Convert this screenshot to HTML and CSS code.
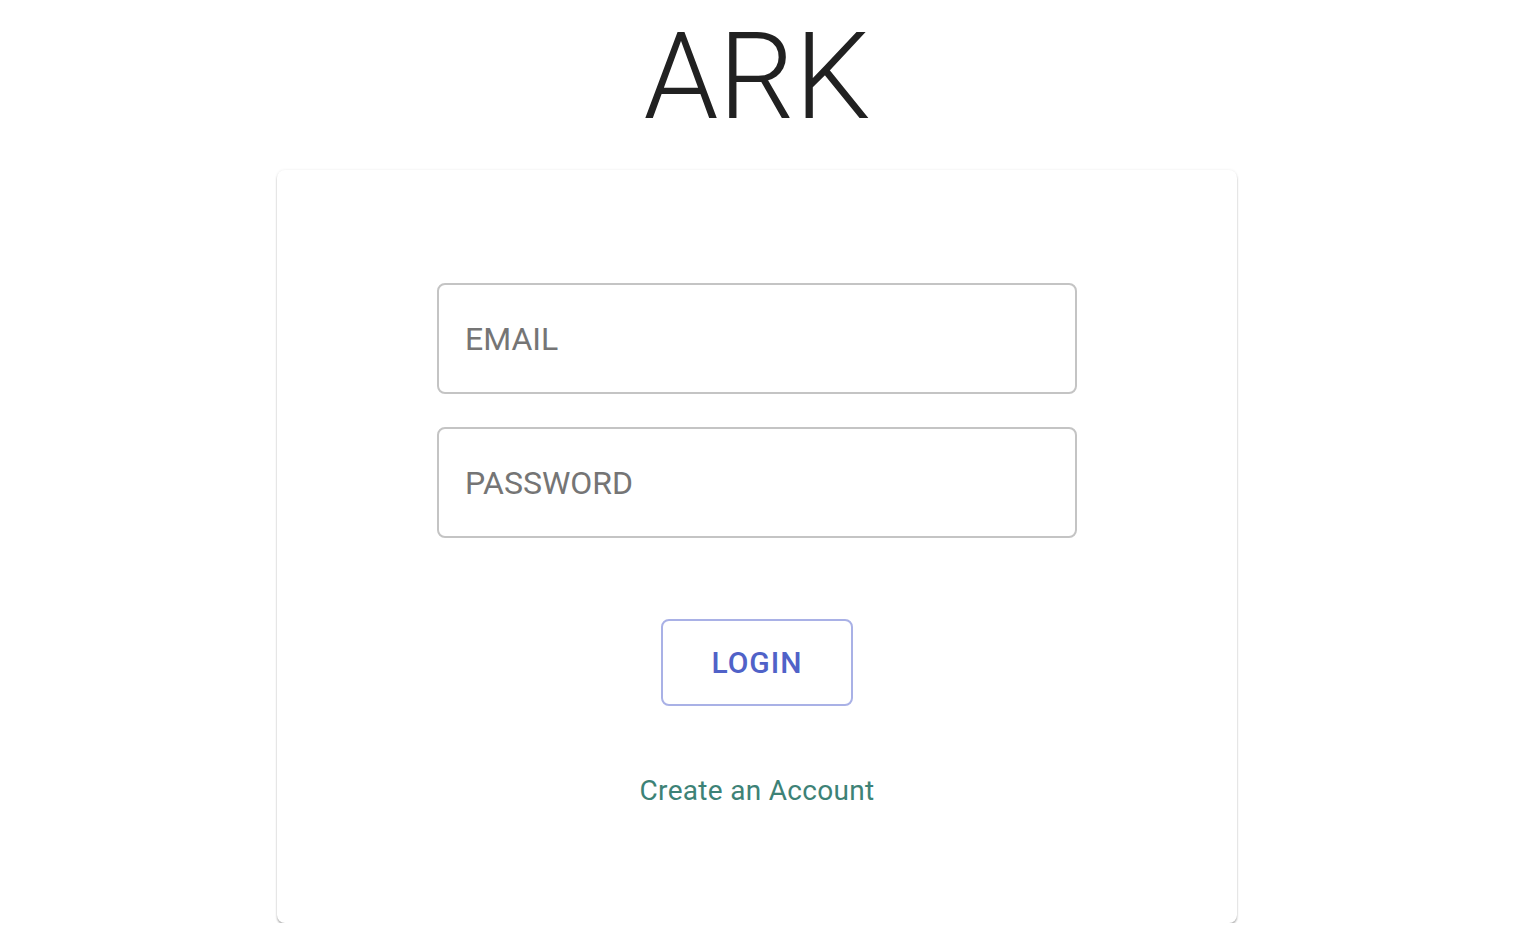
FILE: index.html
```html
<!DOCTYPE html>
<html lang="en">
<head>
  <meta charset="UTF-8">
  <title>ARK</title>
  <meta name="viewport" content="width=device-width, initial-scale=1.0">
  <link rel="stylesheet" href="styles.css">
</head>
<body>
  <h1 class="title">ARK</h1>

  <div class="card">
    <form class="login-form" onsubmit="return false">
      <input class="field" type="email" placeholder="EMAIL">
      <input class="field" type="password" placeholder="PASSWORD">
      <button class="login-btn" type="submit">LOGIN</button>
    </form>
    <a class="signup-link" href="#">Create an Account</a>
  </div>
</body>
</html>
```

FILE: styles.css
```css
body {
  margin: 0;
  background-color: #fff;
  font-family: Roboto, "Liberation Sans", sans-serif;
  color: #212121;
}

.title {
  margin: 17px 0 33px;
  font-size: 120px;
  font-weight: 300;
  line-height: 1;
  text-align: center;
  color: #212121;
}

.card {
  width: 960px;
  margin: 0 auto;
  padding: 113px 0 111px;
  box-sizing: border-box;
  background-color: #fff;
  border-radius: 8px;
  box-shadow: 0 2px 2px 0 rgba(0, 0, 0, 0.28), 0 0 3px 0 rgba(0, 0, 0, 0.08);
  display: flex;
  flex-direction: column;
  align-items: center;
}

.login-form {
  display: flex;
  flex-direction: column;
  align-items: center;
  gap: 33px;
}

.field {
  width: 640px;
  height: 111px;
  box-sizing: border-box;
  padding: 0 26px;
  border: 2px solid #c4c4c4;
  border-radius: 8px;
  font-family: inherit;
  font-size: 32px;
  color: #212121;
  outline: none;
}

.field::placeholder {
  color: #757575;
  opacity: 1;
}

.login-btn {
  margin-top: 48px;
  width: 192px;
  height: 87px;
  background: #fff;
  border: 2px solid #a9b1e6;
  border-radius: 8px;
  font-family: inherit;
  font-size: 30px;
  font-weight: 500;
  letter-spacing: 1px;
  color: #5062c8;
  cursor: pointer;
}

.signup-link {
  margin-top: 64px;
  font-size: 28px;
  line-height: 42px;
  color: #3d8276;
  text-decoration: none;
  letter-spacing: 0.3px;
}
```
